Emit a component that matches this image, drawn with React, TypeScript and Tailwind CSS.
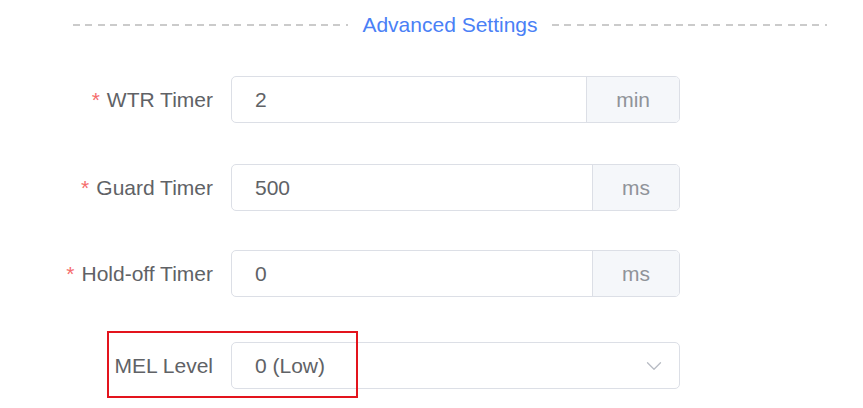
import { ChevronDown } from 'lucide-react'

const fields = [
  { id: 'wtr', label: 'WTR Timer', value: '2', unit: 'min', required: true, mt: 'mt-[32px]' },
  { id: 'guard', label: 'Guard Timer', value: '500', unit: 'ms', required: true, mt: 'mt-[41px]' },
  { id: 'holdoff', label: 'Hold-off Timer', value: '0', unit: 'ms', required: true, mt: 'mt-[39px]' },
]

const Dashes = () => (
  <div className="h-[2px] flex-1 bg-[repeating-linear-gradient(to_right,#cbcbcb_0_7px,transparent_7px_12.4px)]" />
)

const App = () => {
  return (
    <div className="relative w-[863px] h-[408px] bg-white overflow-hidden font-['Liberation_Sans',Arial,sans-serif] text-[21px]">
      {/* Section divider */}
      <div className="flex items-center gap-[14px] pl-[73px] pr-[36px] pt-[5px] h-[44px]">
        <Dashes />
        <span className="text-[#4a80f6] leading-none">Advanced Settings</span>
        <Dashes />
      </div>

      {fields.map(field => (
        <div key={field.id} className={`${field.mt} flex items-center h-[47px]`}>
          <label className="w-[213px] text-right text-[#606266] leading-none">
            {field.required && <span className="text-[#f56c6c] mr-[7px]">*</span>}
            {field.label}
          </label>
          <div className="ml-[18px] w-[449px] h-[47px] flex border border-[#dcdfe6] rounded-[5px] overflow-hidden">
            <div className="flex-1 flex items-center pl-[23px] text-[#606266]">{field.value}</div>
            <div className="flex items-center px-[29px] bg-[#f5f7fa] border-l border-[#dcdfe6] text-[#909399]">
              {field.unit}
            </div>
          </div>
        </div>
      ))}

      {/* MEL Level select */}
      <div className="mt-[45px] flex items-center h-[47px]">
        <label className="w-[213px] text-right text-[#606266] leading-none">MEL Level</label>
        <div className="ml-[18px] w-[449px] h-[47px] flex items-center justify-between border border-[#dcdfe6] rounded-[5px] pl-[23px] pr-[12px] text-[#606266]">
          <span>0 (Low)</span>
          <ChevronDown className="w-[26px] h-[26px] text-[#b8bcc4]" strokeWidth={1.2} />
        </div>
      </div>

      {/* annotation box */}
      <div className="absolute left-[107px] top-[331px] w-[251px] h-[67px] border-2 border-[#e3141d]" />
    </div>
  )
}

export default App
